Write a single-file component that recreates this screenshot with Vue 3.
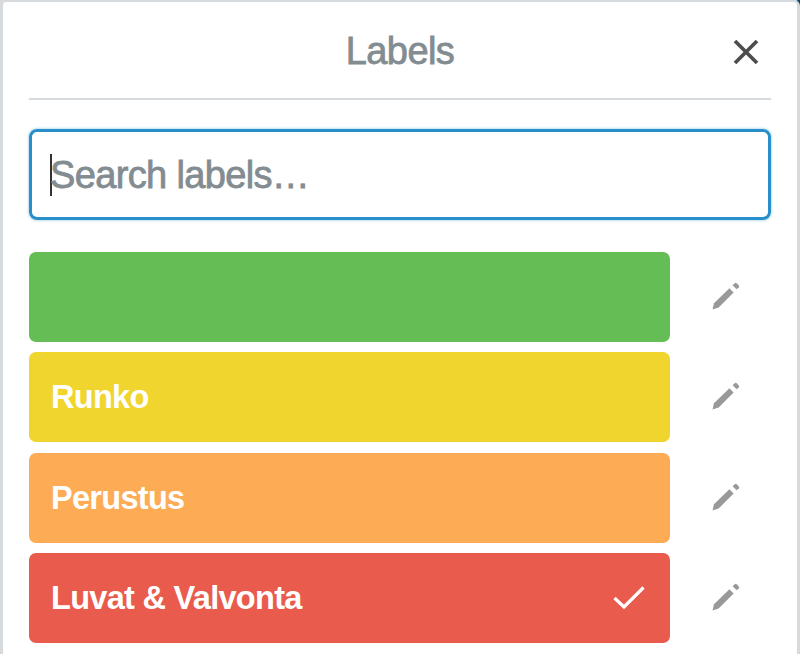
<script setup>
const labels = [
  { name: '', tone: 'green' },
  { name: 'Runko', tone: 'yellow' },
  { name: 'Perustus', tone: 'orange' },
  { name: 'Luvat & Valvonta', tone: 'red', selected: true },
]
</script>

<template>
  <div class="backdrop">
    <section class="popover">
      <header class="header">
        <h1 class="title">Labels</h1>
        <svg class="close" viewBox="0 0 26 26">
          <path d="M2 2 L24 24 M24 2 L2 24" />
        </svg>
      </header>
      <div class="search">
        <span class="caret"></span>
        <span class="placeholder">Search labels…</span>
      </div>
      <ul class="list">
        <li v-for="label in labels" :key="label.tone" class="row">
          <div class="label" :class="label.tone">
            <span class="name">{{ label.name }}</span>
            <svg v-if="label.selected" class="check" viewBox="0 0 32 24">
              <path d="M1.5 12 L11 21 L30.5 1.5" />
            </svg>
          </div>
          <svg class="pencil" viewBox="0 0 28 28">
            <path d="M.5 27.5 L2 21.2 L17.4 6.2 L21.6 10.4 L6.6 25.4 Z" />
            <path d="M20.6 3.2 L23 1 Q23.8 .4 24.6 1.2 L26.8 3.4 Q27.5 4.4 26.9 5.2 L24.6 7.2 Z" />
          </svg>
        </li>
      </ul>
    </section>
  </div>
</template>

<style>
body {
  margin: 0;
  overflow: hidden;
}
</style>

<style scoped>
.backdrop {
  height: 654px;
  overflow: hidden;
  background: linear-gradient(to right, #d6dadc 796px, #0e4668 798px);
}
.popover {
  box-sizing: border-box;
  width: 800px;
  height: 666px;
  padding: 0 26px;
  border: solid #d6dadc;
  border-width: 2px 3px;
  border-radius: 6px;
  background: #fff;
  font-family: "Liberation Sans", Arial, sans-serif;
}
.header {
  position: relative;
  display: flex;
  box-sizing: border-box;
  width: 742px;
  height: 98px;
  justify-content: center;
  border-bottom: 2px solid #d6dadc;
}
.title {
  margin: 0;
  color: #838c91;
  font-size: 38px;
  font-weight: 400;
  letter-spacing: -0.6px;
  line-height: 98px;
  -webkit-text-stroke: 0.8px #838c91;
}
.close {
  position: absolute;
  top: 37px;
  right: 12px;
  width: 26px;
  height: 26px;
  fill: none;
  stroke: #4d4d4d;
  stroke-width: 3.7;
}
.search {
  display: flex;
  box-sizing: border-box;
  width: 742px;
  height: 91px;
  margin-top: 29px;
  padding-left: 18px;
  align-items: center;
  border: 3px solid #298fca;
  border-radius: 8px;
  box-shadow: 0 0 3px #298fca99;
}
.caret {
  width: 2px;
  height: 42px;
  margin-right: -2px;
  background: #333;
}
.placeholder {
  color: #838c91;
  font-size: 38px;
  letter-spacing: -0.65px;
  line-height: 44px;
  -webkit-text-stroke: 0.8px #838c91;
}
.list {
  display: grid;
  margin: 31.5px 0 0;
  padding: 0;
  gap: 10.67px;
  list-style: none;
}
.row {
  display: flex;
  align-items: center;
}
.label {
  display: flex;
  box-sizing: border-box;
  width: 641px;
  height: 90px;
  padding: 0 25px 0 22px;
  align-items: center;
  justify-content: space-between;
  border-radius: 7px;
  color: #fff;
}
.name {
  font-size: 32.5px;
  font-weight: 700;
  line-height: 40px;
  letter-spacing: -0.7px;
}
.green { background: #64bd55; }
.yellow { background: #f0d52e; }
.orange { background: #fdab54; }
.red { background: #e95b4c; }
.check {
  width: 32px;
  height: 24px;
  fill: none;
  stroke: #fff;
  stroke-width: 3.2;
}
.pencil {
  width: 28px;
  height: 28px;
  margin: 0 0 2px 41.5px;
  fill: #999;
}
</style>
